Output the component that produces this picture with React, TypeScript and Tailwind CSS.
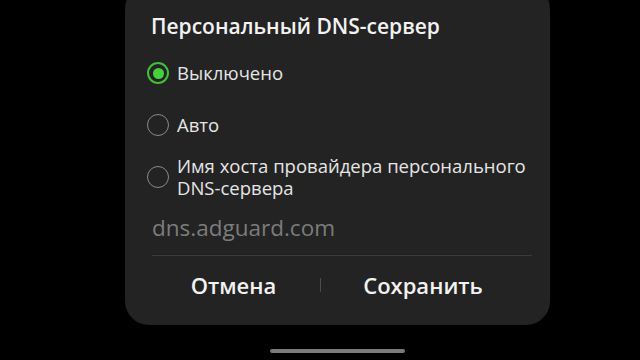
import React, { useState } from "react";

const options = [
  { id: "off", label: "Выключено" },
  { id: "auto", label: "Авто" },
  { id: "host", label: "Имя хоста провайдера персонального DNS-сервера" },
];

const Radio: React.FC<{ checked: boolean }> = ({ checked }) => (
  <span
    className={
      checked
        ? "flex h-[22px] w-[22px] shrink-0 items-center justify-center rounded-full border-2 border-[#3fbf3a]"
        : "flex h-[22px] w-[22px] shrink-0 items-center justify-center rounded-full border-[1.5px] border-[#8a8a8a]"
    }
  >
    {checked && <span className="h-[11px] w-[11px] rounded-full bg-[#45d13e]" />}
  </span>
);

const App: React.FC = () => {
  const [selected, setSelected] = useState("off");

  return (
    <div
      className="flex h-[360px] w-[640px] flex-col overflow-hidden bg-black"
      style={{ fontFamily: '"Open Sans", "Noto Sans", sans-serif' }}
    >
      <section className="mt-[-15px] ml-[125px] flex h-[340px] w-[425px] flex-col rounded-[24px] bg-[#232323] px-[22px] pt-[27px]">
        <h2 className="pl-[4px] text-[21px] leading-[28px] font-semibold text-[#f2f2f2]">
          Персональный DNS-сервер
        </h2>

        <div className="mt-[7px] flex flex-col">
          {options.map((o) => (
            <button
              key={o.id}
              type="button"
              onClick={() => setSelected(o.id)}
              className="flex h-[52px] items-center gap-[8px] text-left"
            >
              <Radio checked={selected === o.id} />
              <span className="text-[18.5px] leading-[22px] text-[#e6e6e6]">{o.label}</span>
            </button>
          ))}
        </div>

        <p className="mt-[11px] pl-[5px] text-[22.5px] leading-[28px] text-[#7c7c7c]">dns.adguard.com</p>

        <div className="mt-[13px] mr-[-4px] ml-[5px] h-px bg-[#3a3a3a]" />

        <div className="flex h-[58px] items-center">
          <button type="button" className="w-[173px] text-center text-[22px] font-semibold text-[#f2f2f2]">
            Отмена
          </button>
          <span className="h-[14px] w-px bg-[#4a4a4a]" />
          <button type="button" className="w-[204px] text-center text-[22px] font-semibold text-[#f2f2f2]">
            Сохранить
          </button>
        </div>
      </section>

      <div className="mt-[24px] ml-[270px] h-[4px] w-[135px] rounded-full bg-[#7a7a7a]" />
    </div>
  );
};

export default App;
